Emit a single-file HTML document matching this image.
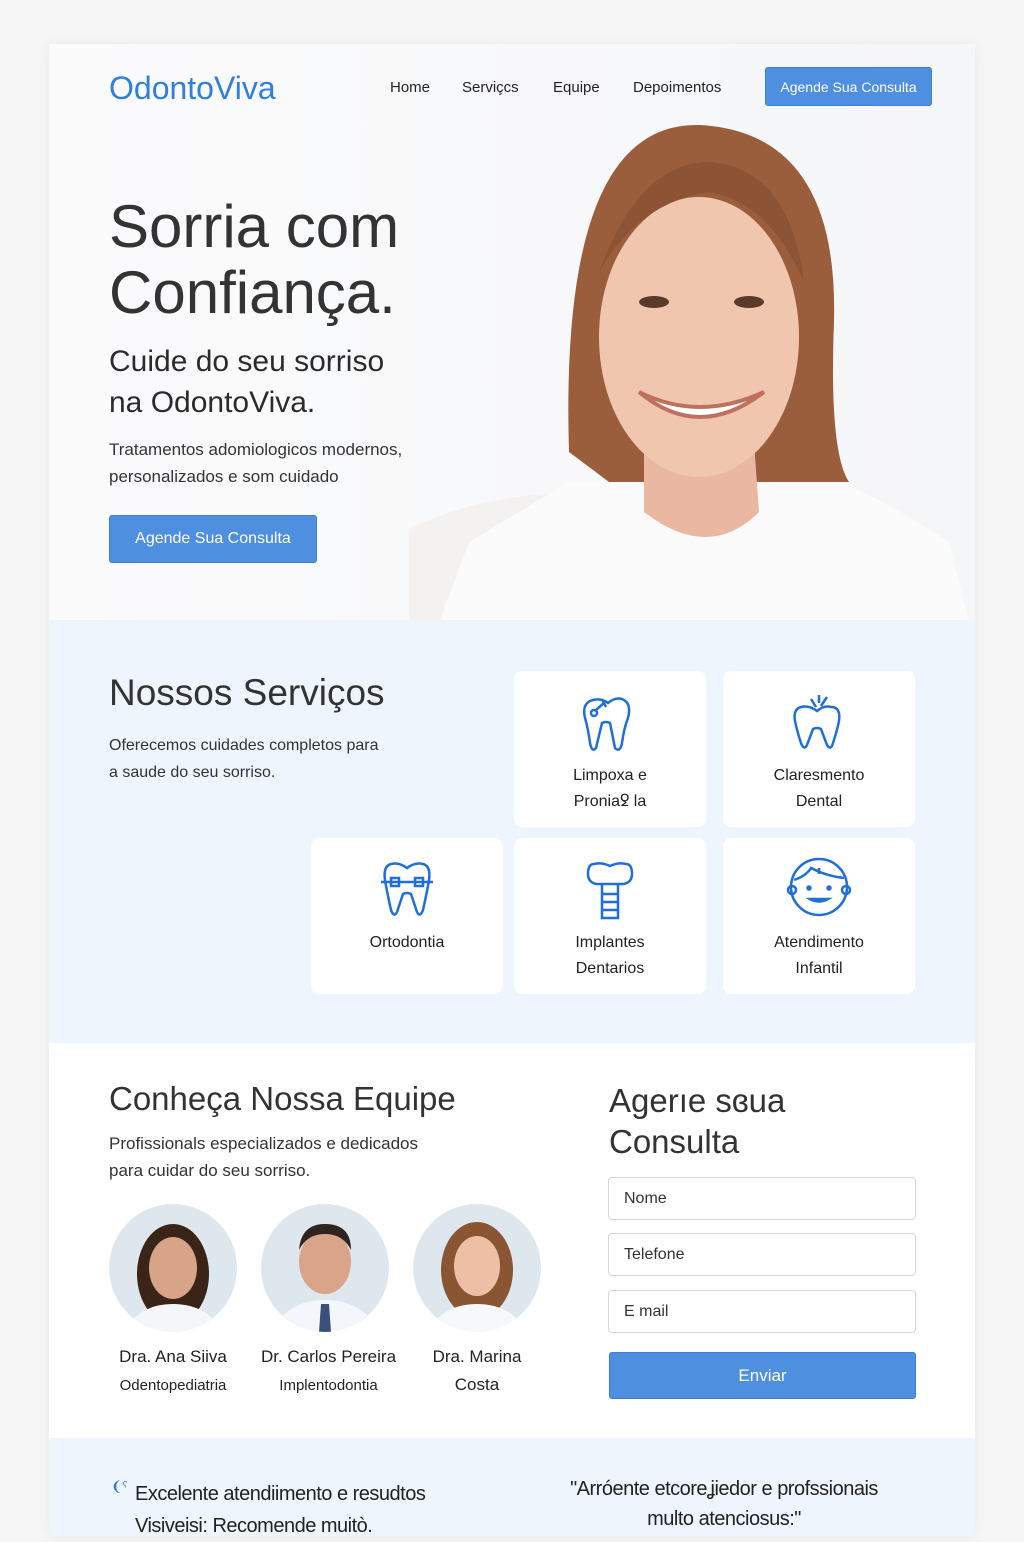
<!DOCTYPE html>
<html><head><meta charset="utf-8"><style>
*{margin:0;padding:0;box-sizing:border-box}
body{width:1024px;height:1536px;background:#f6f6f7;font-family:"Liberation Sans",sans-serif;color:#2b2b2b;position:relative;overflow:hidden}
.card{position:absolute;left:49px;top:44px;width:926px;height:1492px;background:#fff;box-shadow:0 0 12px rgba(0,0,0,.06)}
.abs{position:absolute}
.hero{position:absolute;left:0;top:0;width:926px;height:576px;background:linear-gradient(90deg,#fbfbfc,#f5f6f8);overflow:hidden}
.nav a{position:absolute;top:35px;font-size:15px;color:#222}
.btn{position:absolute;background:#4f8fe0;color:#fff;border:1px solid #3d7ed6;border-radius:3px;display:flex;align-items:center;justify-content:center}
.svc{position:absolute;top:576px;left:0;width:926px;height:423px;background:#eef5fd}
.tile{position:absolute;background:#fff;border-radius:8px;width:192px;height:156px;text-align:center;font-size:16px;line-height:26px;color:#222}
.tile svg{position:absolute;left:66px;top:22px}
.tile p{position:absolute;left:0;right:0}
.inp{position:absolute;left:559px;width:308px;height:43px;border:1px solid #d6d6d6;border-radius:4px;font-size:16px;padding:12px 15px;color:#333}
.av{position:absolute;top:1160px;width:128px;height:128px;border-radius:50%;background:#dfe7ee;overflow:hidden}
.nm{position:absolute;text-align:center;font-size:17px;color:#222;line-height:28px}
</style></head><body>
<div class="card">
 <div class="hero">
  <svg class="abs" style="left:360px;top:78px" width="566" height="500" viewBox="0 0 566 500">
   <ellipse cx="180" cy="470" rx="230" ry="100" fill="#f4f2f0"/>
   <path d="M160 360 Q110 390 60 420 L30 500 L560 500 L540 420 Q480 380 430 360 Z" fill="#fbfbfb"/>
   <path d="M160 330 Q150 0 290 3 Q430 10 425 200 Q420 330 440 360 L380 360 L200 360 Z" fill="#9a5e3c"/>
   <path d="M235 330 L235 390 Q300 440 350 390 L345 320 Z" fill="#eab8a0"/>
   <ellipse cx="290" cy="215" rx="100" ry="140" fill="#f1c6ae"/>
   <path d="M190 150 Q230 40 300 40 Q380 45 395 160 Q360 80 300 70 Q230 80 190 150Z" fill="#8c5334"/>
   <path d="M230 270 Q290 320 355 270 Q290 300 230 270Z" fill="#fff" stroke="#c0705e" stroke-width="4"/>
   <ellipse cx="245" cy="180" rx="15" ry="6" fill="#5a3a2a"/><ellipse cx="340" cy="180" rx="15" ry="6" fill="#5a3a2a"/>
  </svg>
  <div class="abs" style="left:60px;top:26px;font-size:32px;color:#2f7fde">OdontoViva</div>
  <div class="nav"><a style="left:341px">Home</a><a style="left:413px">Serviçcs</a><a style="left:504px">Equipe</a><a style="left:584px">Depoimentos</a></div>
  <div class="btn" style="left:716px;top:23px;width:167px;height:39px;font-size:14px">Agende Sua Consulta</div>
  <div class="abs" style="left:60px;top:150px;font-size:60px;line-height:66px;color:#333">Sorria com<br>Confiança.</div>
  <div class="abs" style="left:60px;top:297px;font-size:30px;line-height:41px;color:#2b2b2b">Cuide do seu sorriso<br>na OdontoViva.</div>
  <div class="abs" style="left:60px;top:392px;font-size:17px;line-height:27px;color:#333">Tratamentos adomiologicos modernos,<br>personalizados e som cuidado</div>
  <div class="btn" style="left:60px;top:471px;width:208px;height:48px;font-size:16px">Agende Sua Consulta</div>
 </div>
 <div class="svc">
  <div class="abs" style="left:60px;top:52px;font-size:37px;color:#333">Nossos Serviços</div>
  <div class="abs" style="left:60px;top:112px;font-size:16px;line-height:27px;color:#333">Oferecemos cuidades completos para<br>a saude do seu sorriso.</div>
  <div class="tile" style="left:465px;top:51px"><svg width="60" height="62" viewBox="0 0 60 62" fill="none" stroke="#1f6fd6" stroke-width="2.5"><path d="M10 8 Q2 12 5 25 Q8 35 10 50 Q12 60 16 55 L22 30 Q26 28 30 30 L35 55 Q40 60 42 50 Q44 35 48 25 Q52 10 42 6 Q35 4 28 10 Q20 4 10 8Z"/><circle cx="14" cy="20" r="3"/><path d="M16 17 L24 10 M22 6 L26 14"/></svg><p style="top:92px">Limpoxa e<br>Proniaꝿ la</p></div>
  <div class="tile" style="left:674px;top:51px"><svg width="60" height="62" viewBox="0 0 60 62" fill="none" stroke="#1f6fd6" stroke-width="2.5"><path d="M12 14 Q4 16 6 28 Q8 38 12 50 Q15 58 18 52 L24 36 Q28 34 32 36 L38 52 Q42 58 44 50 Q48 38 50 28 Q52 14 42 14 Q35 12 28 18 Q20 12 12 14Z"/><path d="M22 6 L27 14 M30 2 V10 M38 4 L32 13"/></svg><p style="top:92px">Claresmento<br>Dental</p></div>
  <div class="tile" style="left:262px;top:218px"><svg width="60" height="62" viewBox="0 0 60 62" fill="none" stroke="#1f6fd6" stroke-width="2.5"><path d="M14 4 Q6 6 8 20 Q10 32 14 50 Q17 58 20 52 L26 34 Q30 32 34 34 L40 52 Q43 58 46 50 Q50 32 52 20 Q54 6 46 4 Q38 2 30 8 Q22 2 14 4Z"/><path d="M4 22 H56"/><rect x="14" y="18" width="8" height="8"/><rect x="38" y="18" width="8" height="8"/></svg><p style="top:92px">Ortodontia</p></div>
  <div class="tile" style="left:465px;top:218px"><svg width="60" height="62" viewBox="0 0 60 62" fill="none" stroke="#1f6fd6" stroke-width="2.5"><path d="M14 4 Q8 4 8 14 Q8 22 16 24 H44 Q52 22 52 14 Q52 4 46 4 Q38 2 30 6 Q22 2 14 4Z"/><path d="M22 24 V58 H38 V24 M22 34 H38 M22 42 H38 M22 50 H38"/></svg><p style="top:92px">Implantes<br>Dentarios</p></div>
  <div class="tile" style="left:674px;top:218px"><svg width="66" height="66" viewBox="0 0 66 66" fill="none" stroke="#1f6fd6" stroke-width="2.5" style="left:63px;top:16px"><circle cx="33" cy="33" r="28"/><path d="M8 26 Q20 22 25 14 Q40 22 58 24 M33 14 V20"/><circle cx="6" cy="36" r="4"/><circle cx="60" cy="36" r="4"/><circle cx="23" cy="34" r="1.5" fill="#1f6fd6"/><circle cx="43" cy="34" r="1.5" fill="#1f6fd6"/><path d="M24 45 Q33 50 42 45 Z"/></svg><p style="top:92px">Atendimento<br>Infantil</p></div>
 </div>
 <div class="abs" style="left:60px;top:1036px;font-size:33px;color:#333">Conheça Nossa Equipe</div>
 <div class="abs" style="left:60px;top:1086px;font-size:17px;line-height:27px;color:#333">Profissionals especializados e dedicados<br>para cuidar do seu sorriso.</div>
 <div class="av" style="left:60px"><svg width="128" height="128"><ellipse cx="64" cy="70" rx="36" ry="50" fill="#3a2418"/><ellipse cx="64" cy="64" rx="24" ry="31" fill="#d8a488"/><path d="M14 128 Q30 100 64 100 Q98 100 114 128Z" fill="#f4f6f8"/></svg></div>
 <div class="av" style="left:212px"><svg width="128" height="128"><ellipse cx="64" cy="58" rx="26" ry="32" fill="#d9a489"/><path d="M38 46 Q40 20 64 20 Q90 20 90 46 Q82 30 64 30 Q46 30 38 46Z" fill="#2e2520"/><path d="M10 128 Q26 96 64 96 Q102 96 118 128Z" fill="#f3f6fa"/><path d="M60 100 L68 100 L70 128 L58 128Z" fill="#3c4f7a"/></svg></div>
 <div class="av" style="left:364px"><svg width="128" height="128"><ellipse cx="64" cy="66" rx="36" ry="48" fill="#8a5532"/><ellipse cx="64" cy="62" rx="23" ry="30" fill="#edc0a6"/><path d="M14 128 Q30 100 64 100 Q98 100 114 128Z" fill="#f7f8fa"/></svg></div>
 <div class="nm" style="left:60px;width:128px;top:1299px">Dra. Ana Siiva<br><span style="font-size:15px">Odentopediatria</span></div>
 <div class="nm" style="left:202px;width:155px;top:1299px">Dr. Carlos Pereira<br><span style="font-size:15px">Implentodontia</span></div>
 <div class="nm" style="left:364px;width:128px;top:1299px">Dra. Marina<br>Costa</div>
 <div class="abs" style="left:560px;top:1036px;font-size:33px;line-height:41px;color:#333">Agerıe sɞua<br>Consulta</div>
 <div class="inp" style="top:1133px">Nome</div>
 <div class="inp" style="top:1189px">Telefone</div>
 <div class="inp" style="top:1246px">E mail</div>
 <div class="btn" style="left:560px;top:1308px;width:307px;height:47px;font-size:17px">Enviar</div>
 <div class="abs" style="left:0;top:1394px;width:926px;height:98px;background:#eef5fd">
  <div class="abs" style="left:62px;top:40px;color:#2f7fde;font-size:14px">❨ˤ</div>
  <div class="abs" style="left:86px;top:40px;font-size:20px;line-height:32px;color:#222;letter-spacing:-.5px">Excelente atendiimento e resudtos<br>Visiveisi: Recomende muitò.</div>
  <div class="abs" style="left:480px;top:36px;width:390px;text-align:center;font-size:20px;line-height:30px;color:#222;letter-spacing:-.5px">"Arróente etcoreʝiedor e profssionais<br>multo atenciosus:"</div>
 </div>
</div>
</body></html>
